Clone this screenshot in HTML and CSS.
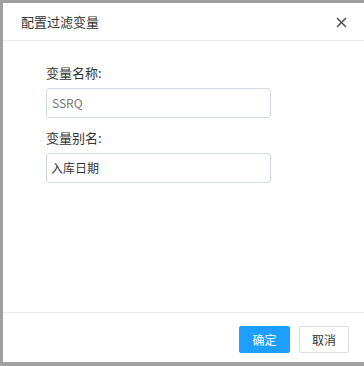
FILE: index.html
```html
<!DOCTYPE html>
<html lang="zh-CN">
<head>
    <meta charset="UTF-8">
    <meta name="viewport" content="width=device-width, initial-scale=1.0">
    <title>配置过滤变量</title>
    <link rel="stylesheet" href="styles.css">
</head>
<body>

<div class="dialog">
    <div class="dialog-title">
        <span>配置过滤变量</span>
        <svg class="close" width="11" height="11" viewBox="0 0 11 11">
            <path d="M1 1 L10 10 M10 1 L1 10" stroke="#555" stroke-width="1.6" fill="none"/>
        </svg>
    </div>
    <div class="dialog-body">
        <div class="field">
            <label class="field-label">变量名称:</label>
            <div class="input readonly">SSRQ</div>
        </div>
        <div class="field">
            <label class="field-label">变量别名:</label>
            <div class="input">入库日期</div>
        </div>
    </div>
    <div class="dialog-footer">
        <button class="btn btn-primary">确定</button>
        <button class="btn">取消</button>
    </div>
</div>

</body>
</html>
```

FILE: styles.css
```css
* {
    box-sizing: border-box;
}
body {
    margin: 0;
    height: 366px;
    padding: 3px 0 0 3px;
    background-color: #a0a0a0;
    font-family: "Noto Sans CJK SC", "Noto Sans", sans-serif;
    color: #333;
    overflow: hidden;
}
.dialog {
    width: 361px;
    height: 359px;
    background-color: #fff;
    display: flex;
    flex-direction: column;
}
.dialog-title {
    height: 38px;
    border-bottom: 1px solid #ebebeb;
    display: flex;
    justify-content: space-between;
    align-items: center;
    padding: 0 17px 0 18px;
    font-size: 13px;
    line-height: 20px;
}
.close {
    display: block;
    margin-top: 1px;
}
.dialog-body {
    flex: 1;
    padding: 22px 0 0 43px;
    border-bottom: 1px solid #ebebeb;
}
.field + .field {
    margin-top: 10px;
}
.field-label {
    display: block;
    font-size: 13px;
    line-height: 20px;
    margin-bottom: 5px;
}
.input {
    width: 225px;
    height: 30px;
    border: 1px solid #d3dae4;
    border-radius: 3px;
    padding: 0 4px;
    font-size: 12px;
    line-height: 28px;
    color: #333;
}
.input.readonly {
    color: #777;
    padding-left: 5px;
}
.dialog-footer {
    height: 49px;
    padding: 13px 15px 9px;
    display: flex;
    justify-content: flex-end;
    gap: 9px;
}
.btn {
    height: 27px;
    width: 50px;
    padding: 0;
    border: 1px solid #dedede;
    border-radius: 2px;
    background-color: #fff;
    color: #333;
    font-family: inherit;
    font-size: 12px;
    line-height: 25px;
    cursor: pointer;
}
.btn-primary {
    width: 51px;
    border-color: #1e9fff;
    background-color: #1e9fff;
    color: #fff;
}
```
